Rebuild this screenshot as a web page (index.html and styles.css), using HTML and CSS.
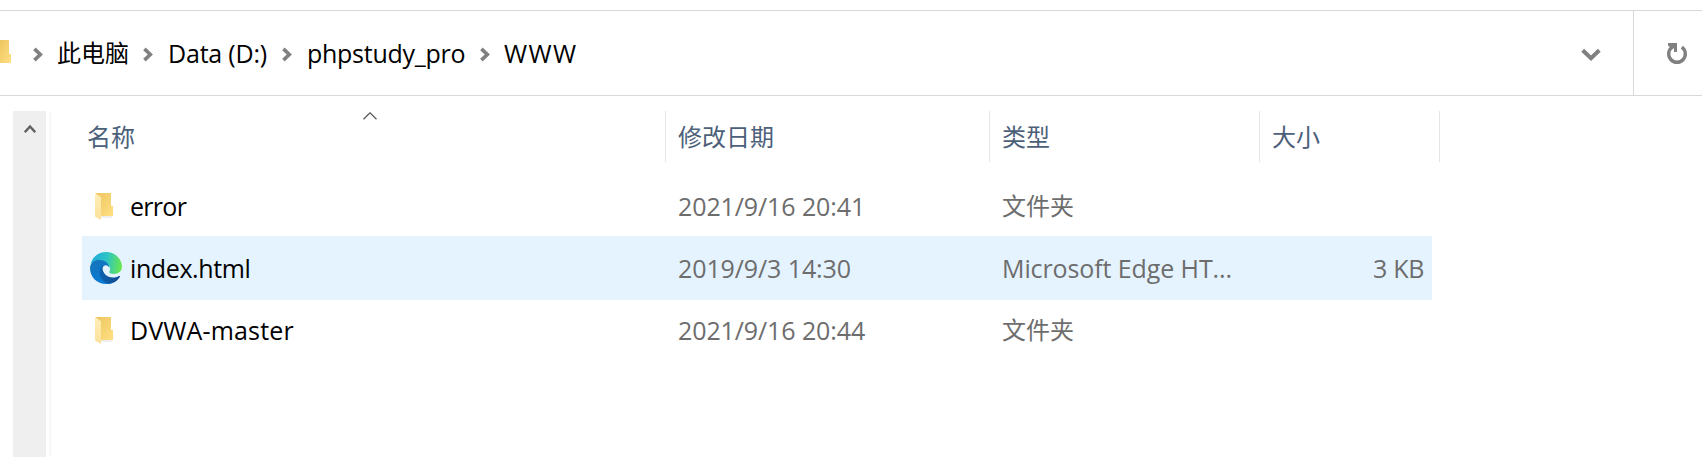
FILE: index.html
```html
<!DOCTYPE html>
<html lang="zh-CN">
<head>
<meta charset="utf-8">
<title>WWW</title>
<link rel="stylesheet" href="styles.css">
</head>
<body>
<svg class="defs" width="0" height="0" aria-hidden="true">
  <defs>
    <linearGradient id="back" x1="0" y1="0" x2="1" y2="1"><stop offset="0" stop-color="#edc55f"/><stop offset="1" stop-color="#ffe083"/></linearGradient>
    <linearGradient id="front" x1="0" y1="0" x2="0" y2="1"><stop offset="0" stop-color="#ffeeb8"/><stop offset="1" stop-color="#fce09a"/></linearGradient>
    <linearGradient id="top" x1="0" y1="0.4" x2="1" y2="0.5"><stop offset="0" stop-color="#20a9dc"/><stop offset=".5" stop-color="#2bc3c6"/><stop offset="1" stop-color="#6be84e"/></linearGradient>
    <linearGradient id="left" x1="0" y1="0" x2=".4" y2="1"><stop offset="0" stop-color="#1674b8"/><stop offset="1" stop-color="#0a7bd6"/></linearGradient>
    <linearGradient id="low" x1="0" y1="0" x2="1" y2="0"><stop offset="0" stop-color="#0c62ae"/><stop offset="1" stop-color="#124a91"/></linearGradient>
    <symbol id="crumb" viewBox="0 0 10 15"><path d="M1.4 1.9 7.3 7.5 1.4 13.1" fill="none" stroke="#808080" stroke-width="3.6"/></symbol>
    <symbol id="folder" viewBox="0 0 20 28">
      <path d="M4 23h14l-2 2H7z" fill="#eee"/>
      <path d="M1 0h15v13h2v10H5z" fill="url(#back)"/>
      <path d="M0 0 6 4.2V27L0 23.5z" fill="url(#front)"/>
    </symbol>
    <symbol id="edge" viewBox="0 0 32 32">
      <path d="M.6 12C2.600 4.500 9 0 16 0c9.500 0 16 7.500 16 14.500 0 4.700-3.600 7.500-8 7.500-4 0-5.300-1.400-4.800-2.300 1.500-1.800 1.200-4.300-.8-6C14 9 5 7.500.6 12z" fill="url(#top)"/>
      <path d="M0 16C.3 10.500 4.500 8 9.500 8c5 0 9.500 3 9.700 7.500-1.500-2.400-4-2.700-5.600-1.300-3 2.600-2 8.300 2 11 4 3 8.800 2.800 13.600-.8-2 4.600-7 7.600-13.200 7.600C7 32 0 25 0 16z" fill="url(#left)"/>
      <path d="M13.300 13.300C9 16 8.500 22.500 11.500 26.800c2 3 4.500 4.800 7.700 5C23.800 31.200 28 28.500 30 24.800c.3-.7-.3-1.100-1-.7-5.400 2.800-11.500 1.600-14.600-2.600-2.200-3-2.400-6-1.100-8.200z" fill="url(#low)"/>
    </symbol>
  </defs>
</svg>
<header class="address">
  <nav class="crumbs">
    <svg class="root-icon" width="12" height="24" viewBox="0 0 12 24"><path d="M0 0h9v14h2v9H0z" fill="url(#back)"/></svg>
    <svg class="sep"><use href="#crumb"/></svg><span class="crumb">此电脑</span>
    <svg class="sep"><use href="#crumb"/></svg><span class="latin drive">Data (D:)</span>
    <svg class="sep"><use href="#crumb"/></svg><span class="latin project">phpstudy_pro</span>
    <svg class="sep"><use href="#crumb"/></svg><span class="latin www">WWW</span>
  </nav>
  <svg class="history" width="20" height="14" viewBox="0 0 20 14"><path d="M1.700 2.200 10 10.200 18.300 2.200" fill="none" stroke="#808080" stroke-width="4"/></svg>
  <div class="refresh">
    <svg width="22" height="24" viewBox="0 0 22 24"><path d="M6.200 6.200A8.300 8.300 0 1 0 15.800 6.200" fill="none" stroke="#808080" stroke-width="3.400"/><path d="M2 2H11V11H8V7.200L6 8 2 4.500z" fill="#808080"/></svg>
  </div>
</header>
<main class="pane">
  <div class="scrollbar"><svg width="12" height="10" viewBox="0 0 12 10"><path d="M.8 8.200 6 2.500 11.200 8.200" fill="none" stroke="#606060" stroke-width="2.400"/></svg></div>
  <div class="splitter"></div>
  <section class="files">
    <div class="head">
      <div class="cell">名称<svg class="sort" width="14" height="8" viewBox="0 0 14 8"><path d="M.5 7.200 7 .8 13.500 7.200" fill="none" stroke="#555" stroke-width="1.200"/></svg></div>
      <div class="cell">修改日期</div>
      <div class="cell">类型</div>
      <div class="cell">大小</div>
    </div>
    <div class="row"><div class="name"><span class="icon"><svg width="20" height="28"><use href="#folder"/></svg></span><span class="latin error">error</span></div><div class="latin date">2021/9/16 20:41</div><div class="type">文件夹</div><div class="size"></div></div>
    <div class="row selected"><div class="name"><span class="icon"><svg width="32" height="32"><use href="#edge"/></svg></span><span class="latin index">index.html</span></div><div class="latin date">2019/9/3 14:30</div><div class="latin app">Microsoft Edge HT...</div><div class="latin size">3 KB</div></div>
    <div class="row"><div class="name"><span class="icon"><svg width="20" height="28"><use href="#folder"/></svg></span><span class="latin master">DVWA-master</span></div><div class="latin date">2021/9/16 20:44</div><div class="type">文件夹</div><div class="size"></div></div>
  </section>
</main>
</body>
</html>
```
FILE: styles.css
```css
* { box-sizing: border-box; }
body {
  margin: 0;
  height: 457px;
  overflow: hidden;
  background: #fff;
  color: #000;
  font: 24px/32px "Open Sans", "Noto Sans CJK SC", sans-serif;
  padding-top: 10px;
}
.defs { position: absolute; }
svg { display: block; flex: none; }
.latin { font-size: 25px; padding-bottom: 1px; }
.drive { letter-spacing: -.2px; }
.project { letter-spacing: -.27px; }
.www { letter-spacing: 1.4px; }
.error { letter-spacing: -.7px; }
.index { letter-spacing: -.4px; }
.master { letter-spacing: .15px; }
.date { letter-spacing: -.1px; }
.app { letter-spacing: -.1px; }
.address {
  display: flex;
  align-items: center;
  height: 86px;
  border-top: 1px solid #d9d9d9;
  border-bottom: 1px solid #d9d9d9;
}
.crumbs {
  flex: 1;
  display: grid;
  grid-template-columns: 33px 24px 86px 25px 114px 25px 173px 24px auto;
  align-items: center;
  justify-content: start;
  white-space: nowrap;
}
.root-icon { margin-top: -3px; }
.sep { width: 10px; height: 15px; margin-top: 2px; }
.history { margin-right: 32px; margin-top: 4px; }
.refresh {
  display: flex;
  align-items: center;
  width: 69px;
  height: 84px;
  padding-left: 32px;
  border-left: 1px solid #d9d9d9;
}
.pane {
  display: grid;
  grid-template-columns: 33px 2px 1390px;
  column-gap: 3px;
  height: 346px;
  margin: 15px 0 0 13px;
}
.scrollbar { background: #efefef; padding: 13px 0 0 11px; }
.splitter { background: #f7f7f7; }
.files { padding-left: 28px; }
.head, .row {
  display: grid;
  grid-template-columns: 584px 324px 270px 180px;
  white-space: nowrap;
}
.head { color: #4c607a; height: 51px; margin-bottom: 13px; }
.head .cell { position: relative; border-right: 1px solid #e5e5e5; padding: 10px 0 0 12px; }
.head .cell:first-child { padding-left: 5px; }
.sort { position: absolute; left: 281px; top: 1px; }
.row {
  align-items: center;
  width: 1350px;
  height: 62px;
  grid-template-columns: 596px 324px 250px 180px;
  color: #6d6d6d;
}
.row.selected { height: 64px; margin-top: -1px; margin-bottom: -1px; background: #e5f3ff; }
.name { display: flex; align-items: center; color: #000; }
.icon { display: flex; width: 48px; padding-left: 8px; }
.row:not(.selected) .icon { padding: 1px 0 0 13px; }
.size { text-align: right; padding-right: 8px; letter-spacing: -.3px; }
```
